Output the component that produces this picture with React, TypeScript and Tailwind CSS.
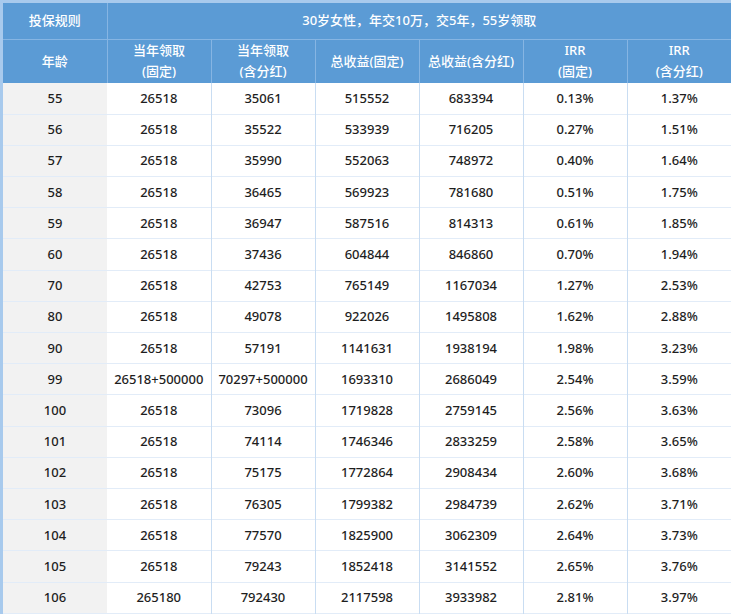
import React from 'react';

// 55岁领取 年金收益演示表
const rows: string[][] = [
  ['55', '26518', '35061', '515552', '683394', '0.13%', '1.37%'],
  ['56', '26518', '35522', '533939', '716205', '0.27%', '1.51%'],
  ['57', '26518', '35990', '552063', '748972', '0.40%', '1.64%'],
  ['58', '26518', '36465', '569923', '781680', '0.51%', '1.75%'],
  ['59', '26518', '36947', '587516', '814313', '0.61%', '1.85%'],
  ['60', '26518', '37436', '604844', '846860', '0.70%', '1.94%'],
  ['70', '26518', '42753', '765149', '1167034', '1.27%', '2.53%'],
  ['80', '26518', '49078', '922026', '1495808', '1.62%', '2.88%'],
  ['90', '26518', '57191', '1141631', '1938194', '1.98%', '3.23%'],
  ['99', '26518+500000', '70297+500000', '1693310', '2686049', '2.54%', '3.59%'],
  ['100', '26518', '73096', '1719828', '2759145', '2.56%', '3.63%'],
  ['101', '26518', '74114', '1746346', '2833259', '2.58%', '3.65%'],
  ['102', '26518', '75175', '1772864', '2908434', '2.60%', '3.68%'],
  ['103', '26518', '76305', '1799382', '2984739', '2.62%', '3.71%'],
  ['104', '26518', '77570', '1825900', '3062309', '2.64%', '3.73%'],
  ['105', '26518', '79243', '1852418', '3141552', '2.65%', '3.76%'],
  ['106', '265180', '792430', '2117598', '3933982', '2.81%', '3.97%'],
];

const headers: [string, string?][] = [
  ['年龄'],
  ['当年领取', '(固定)'],
  ['当年领取', '(含分红)'],
  ['总收益(固定)'],
  ['总收益(含分红)'],
  ['IRR', '(固定)'],
  ['IRR', '(含分红)'],
];

export default function App() {
  return (
    <div
      className="w-[731px] h-[614px] overflow-hidden bg-white border-l-[3px] border-t-[3px] border-[#a8caed]"
      style={{ fontFamily: '"Noto Sans", "Noto Sans CJK SC", sans-serif' }}
    >
      <table className="table-fixed border-collapse w-[728px] text-[13px] leading-[21px]">
        <colgroup>
          {headers.map((_, i) => (
            <col key={i} className="w-[104px]" />
          ))}
        </colgroup>
        <thead className="bg-[#5b9bd5] text-white font-medium">
          <tr className="h-[36px] border-b border-[#86b5e3]">
            <th className="font-medium border-r border-[#86b5e3]">投保规则</th>
            <th colSpan={6} className="font-medium">
              30岁女性，年交10万，交5年，55岁领取
            </th>
          </tr>
          <tr className="h-[44px]">
            {headers.map(([a, b], i) => (
              <th
                key={i}
                className="font-medium border-r border-[#86b5e3] last:border-r-0"
              >
                <div>{a}</div>
                {b && <div>{b}</div>}
              </th>
            ))}
          </tr>
        </thead>
        <tbody className="text-[#1e1e1e] font-medium">
          {rows.map((r) => (
            <tr key={r[0]} className="h-[31.2px] border-b border-[#e2ecf8]">
              {r.map((c, i) => (
                <td
                  key={i}
                  className={
                    i === 0
                      ? 'text-center bg-[#f2f2f2] p-0'
                      : 'text-center p-0 border-r border-[#c9ddf2] last:border-r-0 whitespace-nowrap'
                  }
                >
                  {c}
                </td>
              ))}
            </tr>
          ))}
        </tbody>
      </table>
    </div>
  );
}
